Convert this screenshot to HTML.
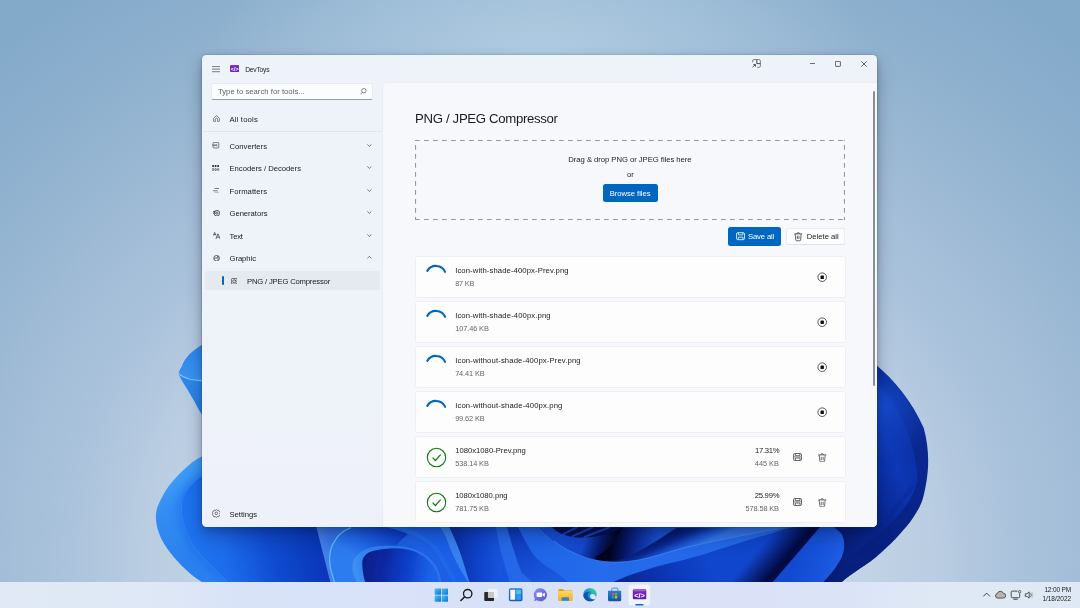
<!DOCTYPE html>
<html lang="en">
<head>
<meta charset="utf-8">
<title>DevToys - PNG / JPEG Compressor</title>
<style>
*{box-sizing:border-box;margin:0;padding:0}
html,body{width:1080px;height:608px;overflow:hidden}
body{position:relative;font-family:"Liberation Sans",sans-serif;color:#1b1b1b;background:#9ab9d4}
.abs,.t{position:absolute}
.t{white-space:pre;line-height:1;top:0;left:0}
#root{position:absolute;left:0;top:0;width:1080px;height:608px;will-change:transform}
#wall{position:absolute;left:0;top:0;width:1080px;height:608px}
#win{position:absolute;left:202px;top:55px;width:675px;height:472px;border-radius:4.5px;background:linear-gradient(180deg,#eef3f9 0%,#eef2f9 60%,#eef1f9 100%);box-shadow:0 0 0 .6px rgba(40,60,90,.2),0 9px 18px rgba(0,10,40,.28),0 2px 6px rgba(0,10,40,.18);overflow:hidden}
#content{position:absolute;left:179.6px;top:27px;width:494.9px;height:445px;background:#f6f8fc;border-top-left-radius:5px;border-left:.6px solid #e9edf3;border-top:.6px solid #e9edf3}
/* sidebar */
.nav{position:absolute;left:0;width:180.5px;height:20.25px}
.nav .t{left:27px;top:7.1px}
.nav svg{position:absolute}
.chev{position:absolute;left:164.4px;top:8.6px;width:4.7px;height:2.8px}
#sel{position:absolute;left:2.5px;top:215.6px;width:175px;height:19.5px;border-radius:2.5px;background:#e5eaf0}
#ind{position:absolute;left:19.5px;top:220.7px;width:1.8px;height:9.3px;border-radius:1px;background:#0067c0}
#search{position:absolute;left:8.7px;top:27.6px;width:162px;height:17.4px;border-radius:2.5px;background:#fbfcfe;border:.6px solid #e6eaf0;border-bottom:.7px solid #989ea6}
#sep{position:absolute;left:0;top:76px;width:179.6px;height:.6px;background:#dfe4ea}
/* content */
#drop{position:absolute;left:415px;top:140.2px;width:430px;height:80px}
.btn{position:absolute;border-radius:2.5px}
.card{position:absolute;left:415px;width:430.5px;height:42px;border-radius:2.5px;background:#fdfdfe;border:.6px solid #edeff3}
.card .fn{left:39.75px;top:11.1px}
.card .sz{left:39.75px;top:24.6px;color:#646668}
#task{position:absolute;left:0;top:581.5px;width:1080px;height:26.5px;background:linear-gradient(90deg,#e0e9f5 0%,#dfe8f6 14%,#d9e3f8 22%,#d8e1f8 45%,#dbe2f8 70%,#dbe4f7 79%,#dfe9f5 86%,#dfe9f5 100%)}
</style>
</head>
<body>
<div id="root">
<svg id="wall" viewBox="0 0 1080 608" width="1080" height="608">
<defs>
  <radialGradient id="bg" gradientUnits="userSpaceOnUse" cx="540" cy="560" r="800" gradientTransform="translate(540 560) scale(1 .87) translate(-540 -560)">
    <stop offset="0" stop-color="#d0deec"/><stop offset=".375" stop-color="#c4d5e6"/><stop offset=".49" stop-color="#bacde2"/>
    <stop offset=".586" stop-color="#abc3dc"/><stop offset=".675" stop-color="#a3bdd8"/><stop offset=".75" stop-color="#9ab8d3"/>
    <stop offset=".875" stop-color="#8db0ce"/><stop offset="1" stop-color="#84aaca"/>
  </radialGradient>
  <radialGradient id="tophl" gradientUnits="userSpaceOnUse" cx="540" cy="60" r="330" gradientTransform="translate(0 60) scale(1 .55) translate(0 -60)">
    <stop offset="0" stop-color="#b0cce2" stop-opacity=".95"/><stop offset="1" stop-color="#aecbe1" stop-opacity="0"/>
  </radialGradient>
  <linearGradient id="gP1" x1="0" y1="0" x2="0" y2="1"><stop offset="0" stop-color="#2c84ea"/><stop offset="1" stop-color="#3a94f2"/></linearGradient>
  <linearGradient id="gP1b" x1="0" y1="0" x2="0" y2="1"><stop offset="0" stop-color="#2f88ec"/><stop offset=".5" stop-color="#2f86ea"/><stop offset="1" stop-color="#2a7ce6"/></linearGradient>
  <linearGradient id="gP2" gradientUnits="userSpaceOnUse" x1="160" y1="485" x2="195" y2="560"><stop offset="0" stop-color="#3e9af5"/><stop offset=".35" stop-color="#328cf2"/><stop offset="1" stop-color="#2a80ee"/></linearGradient>
  <linearGradient id="gP2i" gradientUnits="userSpaceOnUse" x1="185" y1="560" x2="310" y2="525"><stop offset="0" stop-color="#2076f0"/><stop offset=".3" stop-color="#1c6cec"/><stop offset=".65" stop-color="#0f4cd0"/><stop offset="1" stop-color="#0a38b8"/></linearGradient>
  <linearGradient id="gA" gradientUnits="userSpaceOnUse" x1="318" y1="545" x2="345" y2="538"><stop offset="0" stop-color="#4a84ee"/><stop offset=".5" stop-color="#3674ea"/><stop offset="1" stop-color="#2e70ea"/></linearGradient>
  <linearGradient id="gB" gradientUnits="userSpaceOnUse" x1="385" y1="524" x2="360" y2="560"><stop offset="0" stop-color="#0c3cc4"/><stop offset=".3" stop-color="#1450d8"/><stop offset=".65" stop-color="#1f68e8"/><stop offset="1" stop-color="#2c7cf0"/></linearGradient>
  <linearGradient id="gC" gradientUnits="userSpaceOnUse" x1="362" y1="560" x2="440" y2="575"><stop offset="0" stop-color="#061e88"/><stop offset=".3" stop-color="#0929a4"/><stop offset=".6" stop-color="#0e42cc"/><stop offset=".85" stop-color="#1a60e6"/><stop offset="1" stop-color="#1c66ea"/></linearGradient>
  <linearGradient id="gR" gradientUnits="userSpaceOnUse" x1="860" y1="480" x2="920" y2="455"><stop offset="0" stop-color="#0a2c9e"/><stop offset=".6" stop-color="#0d38b6"/><stop offset="1" stop-color="#0b2ea4"/></linearGradient>

  <linearGradient id="gD1" gradientUnits="userSpaceOnUse" x1="400" y1="560" x2="450" y2="535"><stop offset="0" stop-color="#2270f0"/><stop offset="1" stop-color="#1c62e8"/></linearGradient>
  <linearGradient id="gG" gradientUnits="userSpaceOnUse" x1="455" y1="0" x2="500" y2="0"><stop offset="0" stop-color="#0a30a4"/><stop offset=".5" stop-color="#0e42c8"/><stop offset="1" stop-color="#1654dc"/></linearGradient>
  <linearGradient id="gW" gradientUnits="userSpaceOnUse" x1="520" y1="527" x2="545" y2="582"><stop offset="0" stop-color="#0c3abc"/><stop offset="1" stop-color="#1a58dc"/></linearGradient>
  <linearGradient id="gS1" gradientUnits="userSpaceOnUse" x1="540" y1="530" x2="700" y2="575"><stop offset="0" stop-color="#1e64e8"/><stop offset=".4" stop-color="#246cec"/><stop offset="1" stop-color="#2468e8"/></linearGradient>
  <linearGradient id="gBowl" gradientUnits="userSpaceOnUse" x1="560" y1="527" x2="640" y2="565"><stop offset="0" stop-color="#1a56dc"/><stop offset=".45" stop-color="#0c34b0"/><stop offset=".8" stop-color="#06186a"/><stop offset="1" stop-color="#0a2a90"/></linearGradient>
  <linearGradient id="gS3" gradientUnits="userSpaceOnUse" x1="610" y1="545" x2="656" y2="551"><stop offset="0" stop-color="#00041c"/><stop offset=".3" stop-color="#06145c"/><stop offset=".6" stop-color="#0c2e9c"/><stop offset="1" stop-color="#1a50d0"/></linearGradient>
  <linearGradient id="gU" gradientUnits="userSpaceOnUse" x1="673" y1="533.400" x2="682.200" y2="553.400"><stop offset="0" stop-color="#061a70"/><stop offset=".3" stop-color="#0a2890"/><stop offset=".65" stop-color="#1a54d2"/><stop offset="1" stop-color="#3378ec"/></linearGradient>
  <linearGradient id="gLow" gradientUnits="userSpaceOnUse" x1="630" y1="585" x2="700" y2="545"><stop offset="0" stop-color="#0a2894"/><stop offset=".5" stop-color="#0c38b8"/><stop offset="1" stop-color="#1046cc"/></linearGradient>
  <linearGradient id="gFold" gradientUnits="userSpaceOnUse" x1="772" y1="533.500" x2="796.600" y2="554.700"><stop offset="0" stop-color="#040e50" stop-opacity="0"/><stop offset=".45" stop-color="#040e50" stop-opacity=".6"/><stop offset=".8" stop-color="#030a44" stop-opacity="1"/><stop offset="1" stop-color="#030a44"/></linearGradient>
  <linearGradient id="gT" gradientUnits="userSpaceOnUse" x1="795" y1="552" x2="842" y2="560"><stop offset="0" stop-color="#124acf"/><stop offset=".6" stop-color="#1854dc"/><stop offset="1" stop-color="#1e5ee4"/></linearGradient>
  <clipPath id="sil"><path d="M150,300 L150,590 L841.7,590 L841.7,582 C847,577.5 853,573.5 859.8,568.6 C867,564 874,559 881.5,552.3 C888,546 894,541 899.6,534.3 C905,528 910,523 914,516.2 C918,510 921,505 923,498 C924.5,492 925.5,487 926.7,480 C929,465 929,447 923.7,428 C912,401 893,379 877,365.7 L877,300Z"/></clipPath>
  <linearGradient id="gCr" gradientUnits="userSpaceOnUse" x1="352" y1="565" x2="440" y2="550"><stop offset="0" stop-color="#3f92f3"/><stop offset=".12" stop-color="#3586f0"/><stop offset=".5" stop-color="#2c78ec"/><stop offset="1" stop-color="#2a70ea"/></linearGradient>
  <linearGradient id="gS2" gradientUnits="userSpaceOnUse" x1="560" y1="535" x2="612" y2="552"><stop offset="0" stop-color="#164ed4"/><stop offset=".45" stop-color="#1448ce"/><stop offset=".75" stop-color="#071a6c"/><stop offset="1" stop-color="#00041c"/></linearGradient>
  <linearGradient id="gRT" gradientUnits="userSpaceOnUse" x1="835" y1="550" x2="870" y2="560"><stop offset="0" stop-color="#061a70"/><stop offset="1" stop-color="#0a2a98"/></linearGradient>
  <linearGradient id="gRd" gradientUnits="userSpaceOnUse" x1="0" y1="470" x2="0" y2="582"><stop offset="0" stop-color="#051464" stop-opacity="0"/><stop offset="1" stop-color="#051464" stop-opacity=".5"/></linearGradient>
  <radialGradient id="gRl" gradientUnits="userSpaceOnUse" cx="884" cy="405" r="55"><stop offset="0" stop-color="#1a54d8" stop-opacity=".75"/><stop offset=".6" stop-color="#1448c8" stop-opacity=".35"/><stop offset="1" stop-color="#1448c8" stop-opacity="0"/></radialGradient>
  <filter id="b05" x="-10%" y="-10%" width="120%" height="120%"><feGaussianBlur stdDeviation=".6"/></filter>
  <filter id="b1" x="-20%" y="-20%" width="140%" height="140%"><feGaussianBlur stdDeviation="1"/></filter>
  <filter id="b3" x="-20%" y="-20%" width="140%" height="140%"><feGaussianBlur stdDeviation="3"/></filter>
  <filter id="b6" x="-30%" y="-30%" width="160%" height="160%"><feGaussianBlur stdDeviation="6"/></filter>
</defs>
<rect width="1080" height="608" fill="url(#bg)"/>
<rect width="1080" height="300" fill="url(#tophl)"/>

<!-- base body of bloom (mostly hidden under the window) -->
<path d="M203,345 L203,582 L841.7,582 L877,582 L877,300 L203,300Z" fill="#0f47cc" clip-path="url(#sil)"/>

<!-- P1 upper-left petal -->
<path d="M206,342.300 C199,347 194,350.500 189.900,354.100 C186,358 183.500,362 181.800,366.800 C180,370 178.600,372 178.800,373.700 C178.900,374.800 179.200,375.400 179.500,376 C182,381 185,385.500 187.600,389.800 C191,395.500 194,400.500 196.800,405.900 C199,410 202,415 206,421Z" fill="url(#gP1b)"/>
<path d="M206,342.300 C199,347 194,350.500 189.900,354.100 C186,358 183.500,362 181.800,366.800 C180,370 178.600,372 178.800,373.700 C184,378.600 194,380.600 206,380.600Z" fill="url(#gP1)"/>
<path d="M179,373.900 C184,378.600 194,380.800 206,380.800" fill="none" stroke="#7accf9" stroke-width="1.100"/>
<!-- P2 lower-left big petal -->
<path d="M206,454.500 C198,458 192,462 189.400,464.700 C182,471 177,476 172.100,482 C167,488 164,493 161,499.300 C158,505 156.500,509 156,514 C155.500,520 156.500,526 158.500,531.400 C160.500,538 163.500,543 167.200,548.600 C171.500,555 176,560 182,566 C188,572 194,577 201.700,582 L350,582 L350,520 L206,520Z" fill="url(#gP2)"/>
<path d="M206,473 C192,482 183,492 181.7,501 C180.6,512 182,522 186,532 C190,542 196,550 202.7,557 C210,565 220,575 228,582 L340,582 L330,520 L206,520Z" fill="#1664ea" filter="url(#b6)" opacity=".9"/>
<path d="M206,473 C192,482 183,492 181.7,501 C180.6,512 182,522 186,532 C190,542 196,550 202.7,557 C210,565 220,575 228,582 L340,582 L330,520 L206,520Z" fill="url(#gP2i)"/>
<path d="M203,475.500 C193,481 185.700,489.400 182,501.700 C181,510 181.500,516 183.200,521.500 C184.500,528 186.500,533 189.400,538.800 C193,546 197,551 201.700,556 C206,561 210,565 214,568.400 L227.700,582" fill="none" stroke="#3a90f4" stroke-width="1" opacity=".55" filter="url(#b05)"/>

<!-- bottom strip -->
<path d="M316.4,527 L330.3,582 L360,582 L360,520 L316,520Z" fill="url(#gA)"/>
<path d="M351,527.7 C343,531 338,535 335.8,539.4 C332,545 330.5,549 330.3,552 C329.3,556 329.4,559 329.6,561.7 C330,566 330.7,570 331.7,572.8 L334.4,582 L460,582 L460,520 L351,520Z" fill="url(#gB)"/>
<path d="M351,527.7 C343,531 338,535 335.8,539.4 C332,545 330.5,549 330.3,552 C329.3,556 329.4,559 329.6,561.7 C330,566 330.7,570 331.7,572.8 L334.4,582" fill="none" stroke="#5cbcf5" stroke-width="1.3"/>
<!-- inner curl C -->
<path d="M356.700,582 L353.900,575.500 C352.800,572 352.300,568.500 352.500,564.400 C352.800,560.500 355,557 359.400,553.300 C362.500,550.500 367,548.500 373.300,547 C379,545.800 386,545.600 394,545.700 C400,545.500 408,546.500 415,549 C424,552.500 431,558 436,565 C439,570 441,576 441.700,582Z" fill="url(#gCr)"/>
<path d="M366,584 C363.500,578 362.300,570 362.200,562.500 C362.500,557 366,553 373,551 C380,549.200 388,548.200 394,548.200 C401,548.200 408,549 414,551.300 C422,554.500 429,560 433.500,566.500 C436.500,571 438.500,577 439.300,584Z" fill="url(#gC)" filter="url(#b05)"/>

<path d="M408,533.900 C417,537.500 423,541 428.900,545 C434,549.500 437,554 438.900,558.900 L448.600,575.500 L452,582 L441.700,582 C441,576 439,570 436,565 C431,558 424,552.500 415,549 C408,546.500 402,545.600 396,545.600 C400,541 404,537 408,533.900Z" fill="#1d60e4"/>
<!-- right petal -->
<path d="M877,365.7 C893,379 912,401 923.7,428 C929,447 929,465 926.7,480 C925.5,487 924.5,492 923,498 C921,505 918,510 914,516.2 C910,523 905,528 899.6,534.3 C894,541 888,546 881.5,552.3 C874,559 867,564 859.8,568.6 C853,573.5 847,577.5 841.7,582 L780,582 L780,520 L877,520Z" fill="#09278f"/>
<path d="M874,380 C890,395 905,420 912,445 C917,465 917,475 917.7,480 C915,490 913,494 910.4,498 C905,508 899,515 892.3,521.6 C886,528 880,533 874.3,537.9 C864,546 853,553 843.5,559.6 C834,567 826,573 820,577.7 L820,520 L874,520Z" fill="url(#gR)"/>
<path d="M914,485.4 C908,493 901,500 896,507 C892,512 890,517 888.7,521.6" fill="none" stroke="#0a2a98" stroke-width="1.5" filter="url(#b1)"/>
<path d="M877,365.7 C893,379 912,401 923.7,428 C929,447 929,465 926.7,480 C925.5,487 924.5,492 923,498 C921,505 918,510 914,516.2 C910,523 905,528 899.6,534.3 C894,541 888,546 881.5,552.3 C874,559 867,564 859.8,568.6 C853,573.5 847,577.5 841.7,582 L780,582 L780,520 L877,520Z" fill="url(#gRd)"/>
<path d="M877,365.7 C893,379 912,401 923.7,428 C929,447 929,465 926.7,480 C925.5,487 924.5,492 923,498 C921,505 918,510 914,516.2 C910,523 905,528 899.6,534.3 C894,541 888,546 881.5,552.3 C874,559 867,564 859.8,568.6 C853,573.5 847,577.5 841.7,582 L780,582 L780,520 L877,520Z" fill="url(#gRl)"/>

<g clip-path="url(#sil)">
<!-- bands D -->
<path d="M387,527.6 C396,529.5 402,531.5 408,533.9 C417,537.5 423,541 428.9,545 C434,549.5 437,554 438.9,558.9 L448.6,575.5 L452,582 L475,582 L460,520 L387,520Z" fill="url(#gD1)"/>
<path d="M404,527 C416,530.5 428,537.5 436,546 C443,554 450,568 457,582 L475,582 L460,520Z" fill="#1a60e8"/>
<path d="M440.3,527 L445.8,536.7 L452.8,554.7 L459.7,568.6 L468,582 L472,582 L461,554.7 L455.6,540.8 L449.3,527Z" fill="#3880f0"/>
<!-- region G -->
<path d="M449.3,527 L455.6,540.8 L461,554.7 L469.4,582 L512,582 L497,520 L449,520Z" fill="url(#gG)"/>
<!-- band Le-Lf -->
<path d="M495.8,527 L500,547.8 L505.6,568.6 L509.7,582 L534,582 L522,572.8 L516.7,558.9 L511,540.8 L507,527Z" fill="#2468e8"/>
<!-- wedge Lf-Lg -->
<path d="M507,527 L511,540.8 L516.7,558.9 L522,572.8 L532,582 L570,582 C562,577 556,574 550,568.6 C541,562 536,558 533.3,554.7 L525,540.8 L518,527Z" fill="url(#gW)"/>
<!-- swoop S1 -->
<path d="M518,527 L525,540.8 L533.3,554.7 C538,560 544,565 550,568.6 C556,573 562,577 567.8,582 L613.6,582 C622,578 630,575 637.2,572.8 C647,569.5 656,566.5 665,564.4 C676,562 686,560.5 700,559 L800,527Z" fill="url(#gS1)"/>
<!-- lower right area under S1 -->
<path d="M613.6,582 C622,578 630,575 637.2,572.8 C647,569.5 656,566.5 665,564.4 C680,561 700,556 720,549 C750,540 775,532 793.5,527 L822,527 L822,582Z" fill="url(#gLow)"/>
<!-- bowl interior (S4) -->
<path d="M540,528.300 C545,533 549,537 553.900,540.800 C560,546 567,550 574.700,553.300 C581,556.500 588,558.800 595.600,560.300 C602,561.800 609,562.500 616.400,562.400 C624,562.200 630,561.500 637.200,560.300 C647,558.500 656,556 665,553.300 C674,550.700 682,548.500 690,546.400 C720,540 760,531 793.500,527Z" fill="url(#gU)"/>
<!-- S3 -->
<path d="M623,527.300 L678,527 C670,532 663,537 656.700,540.700 C651,544 646,547.500 640,550.700 C633,554.500 627,557.500 620,559.800 C614,561.500 606,562 598,560.500 C596,560 595,558.500 595,557.300 C599,554.500 603,552 606.700,549 C613,543 619,535 623,527.300Z" fill="url(#gS3)"/>
<!-- S2 band -->
<path d="M540,528.300 C545,533 549,537 553.900,540.800 C560,546 567,550 574.700,553.300 C581,556.500 588,558.800 595,560.200 L595,557.300 C599,554.500 603,552 606.700,549 C613,543 619,535 623.300,527.300 L553,527Z" fill="url(#gS2)"/>
<!-- small bowl interior -->
<path d="M552,527 C555,530.500 558,532.500 562,534 C567,536 573,537.300 579,537.500 C585,537.600 590,537.300 595.500,536.400 C601,535.400 607,534 612,532 C616,530.500 619,529 622,527Z" fill="#050f50"/>
<path d="M563.300,534.200L576.700,527.500M572.200,536.400L592.200,527.500M584.400,537L608.900,527.500" fill="none" stroke="#1a4cc8" stroke-width="2" stroke-linecap="round" filter="url(#b05)" opacity=".85"/>
<!-- rim highlight along S1 upper edge -->
<path d="M553.900,540.800 C560,546 567,550 574.700,553.300 C581,556.500 588,558.800 595.600,560.300 C602,561.800 609,562.500 616.400,562.400 C624,562.200 630,561.500 637.200,560.300 C647,558.500 656,556 665,553.300 C674,550.700 682,548.500 690,546.400 C720,540 760,531 793.500,527" fill="none" stroke="#4088f0" stroke-width="1.100" filter="url(#b05)" opacity=".75"/>
<!-- dark region right of T -->
<path d="M830,527 L876.700,527 C872,532 867,536 863.300,540.700 C858,546.500 854,552 850,557.300 C844,566 838,574 833.300,582 L815,582Z" fill="url(#gRT)"/>
<!-- dark fold -->
<path d="M780,520 L827,520 L773,582 L726,582Z" fill="url(#gFold)"/>
<!-- petal T -->
<path d="M820,527 L833.300,527 C838,530 840,532 841.700,534 C843.500,537.500 844.200,541 844.200,544 C844.200,549 843.500,553 841.700,557.300 C839,562.500 836.500,566.500 833.300,570.700 C830,575 826.500,578.500 823.300,582 L773,582Z" fill="url(#gT)"/>
</g>
</svg>

<div id="win"><div class="abs" style="left:.5px;top:0;width:674.5px;height:472px">
  <!-- title bar -->
  <svg class="abs" style="left:9.2px;top:10.8px" width="8.6" height="7" viewBox="0 0 8.6 7"><path d="M0 .6h8.6M0 3.15h8.6M0 5.7h8.6" stroke="#555" stroke-width=".75" fill="none"/></svg>
  <svg class="abs" style="left:27.1px;top:9.8px" width="9.6" height="7" viewBox="0 0 9 6.6"><rect width="9" height="6.6" rx="1" fill="#7425bc"/><rect x=".4" y=".4" width="8.2" height=".8" rx=".3" fill="#8d4ad0"/><text x="4.5" y="5.5" font-size="5.6" font-weight="700" text-anchor="middle" fill="#fff" font-family="Liberation Sans, sans-serif" textLength="7.4" lengthAdjust="spacingAndGlyphs">&lt;/&gt;</text></svg>
  <div class="abs" style="left:42.75px;top:11.8px"><span class="t" style="font-size:6.7px;letter-spacing:-0.234px;">DevToys</span></div>
  <!-- caption buttons -->
  <svg class="abs" style="left:549.6px;top:3.9px" width="9" height="9.1" viewBox="0 0 9 9.1" fill="none" stroke="#555" stroke-width=".7"><path d="M.6 3.400V2A1.400 1.400 0 0 1 2 .6H7A1.400 1.400 0 0 1 8.400 2V7A1.400 1.400 0 0 1 7 8.400H5.200"/><path d="M4.800 .6V4.600H8.400" stroke="#333" stroke-width=".85"/><path d="M.5 8.300L3 5.800" stroke="#333"/><path d="M1 5.300H3.800V8z" fill="#333" stroke="none"/></svg>
  <svg class="abs" style="left:607px;top:8.3px" width="5.8" height="1" viewBox="0 0 5.8 1"><path d="M0 .5h5.8" stroke="#333" stroke-width=".7"/></svg>
  <svg class="abs" style="left:632.4px;top:6.3px" width="5.8" height="5.8" viewBox="0 0 5.8 5.8"><rect x=".4" y=".4" width="5" height="5" rx=".6" fill="none" stroke="#333" stroke-width=".75"/></svg>
  <svg class="abs" style="left:658.5px;top:6.3px" width="6" height="6" viewBox="0 0 6 6"><path d="M.3 .3L5.7 5.7M5.7 .3L.3 5.7" stroke="#333" stroke-width=".75"/></svg>

  <!-- search -->
  <div id="search"><div class="abs" style="left:5.75px;top:4.4px;color:#60646a"><span class="t" style="font-size:7.7px;letter-spacing:0.017px;">Type to search for tools...</span></div>
    <svg class="abs" style="left:148.2px;top:4.6px" width="6.6" height="6.8" viewBox="0 0 6.6 6.8" fill="none" stroke="#555" stroke-width=".7"><circle cx="3.9" cy="2.7" r="2.2"/><path d="M2.3 4.4L.4 6.4"/></svg>
  </div>
  <!-- nav -->
  <div class="nav" style="top:53.6px">
    <svg style="left:10.3px;top:6.2px" width="7" height="7" viewBox="0 0 7 7" fill="none" stroke="#555" stroke-width=".7"><path d="M.6 3.2L3.5 .6 6.4 3.2V6a.5.5 0 0 1-.5.5H4.6V4.2a1.1 1.1 0 0 0-2.2 0V6.5H1.1A.5.5 0 0 1 .6 6z"/></svg>
    <span class="t" style="font-size:7.7px;letter-spacing:0.166px;">All tools</span></div>
  <div id="sep"></div>
  <div class="nav" style="top:80.6px">
    <svg style="left:9.9px;top:6.6px" width="7.2" height="6.4" viewBox="0 0 7.2 6.4" fill="none" stroke="#3a3a3a" stroke-width=".65"><rect x="1.1" y=".4" width="5.7" height="5.6" rx="1"/><path d="M0 3.2H3.6M2.6 2.2L3.6 3.2 2.600 4.200M4.800 1.900V4.500"/></svg>
    <span class="t" style="font-size:7.7px;letter-spacing:-0.012px;">Converters</span><svg class="chev" viewBox="0 0 4.7 2.8"><path d="M.3 .4L2.35 2.4 4.4 .4" fill="none" stroke="#444" stroke-width=".7"/></svg></div>
  <div class="nav" style="top:102.9px">
    <svg style="left:9.900px;top:6.900px" width="7.200" height="6" viewBox="0 0 7.200 6"><g fill="#333"><rect x=".2" y="0" width="1.700" height="2.100" rx=".3"/><rect x="2.750" y="0" width="1.700" height="2.100" rx=".3"/><rect x="5.300" y="0" width="1.700" height="2.100" rx=".3"/></g><g fill="none" stroke="#333" stroke-width=".65"><ellipse cx="1.050" cy="4.500" rx=".750" ry="1.100"/><ellipse cx="3.600" cy="4.500" rx=".750" ry="1.100"/><ellipse cx="6.150" cy="4.500" rx=".750" ry="1.100"/></g></svg>
    <span class="t" style="font-size:7.7px;letter-spacing:-0.016px;">Encoders / Decoders</span><svg class="chev" viewBox="0 0 4.7 2.8"><path d="M.3 .4L2.35 2.4 4.4 .4" fill="none" stroke="#444" stroke-width=".7"/></svg></div>
  <div class="nav" style="top:125.6px">
    <svg style="left:10.6px;top:7.2px" width="6.4" height="5.6" viewBox="0 0 6.4 5.6" fill="none" stroke="#444" stroke-width=".7"><path d="M1.6 .5H6.4M0 2.8H4.8M1.6 5.1H6.4"/></svg>
    <span class="t" style="font-size:7.7px;letter-spacing:0.036px;">Formatters</span><svg class="chev" viewBox="0 0 4.7 2.8"><path d="M.3 .4L2.35 2.4 4.4 .4" fill="none" stroke="#444" stroke-width=".7"/></svg></div>
  <div class="nav" style="top:147.9px">
    <svg style="left:10.2px;top:6.8px" width="7.2" height="6.4" viewBox="0 0 7.2 6.4" fill="none" stroke="#333" stroke-width=".75"><circle cx="3.9" cy="3.2" r="2.8"/><circle cx="3.9" cy="3.2" r="1.1"/><path d="M0 1.6H2.6M0 3.2H2.4"/></svg>
    <span class="t" style="font-size:7.7px;letter-spacing:-0.052px;">Generators</span><svg class="chev" viewBox="0 0 4.7 2.8"><path d="M.3 .4L2.35 2.4 4.4 .4" fill="none" stroke="#444" stroke-width=".7"/></svg></div>
  <div class="nav" style="top:170.6px">
    <svg style="left:10.2px;top:6.4px" width="7.4" height="7.2" viewBox="0 0 7.4 7.2" fill="none" stroke="#333" stroke-width=".7"><path d="M.3 3.6L1.7 .4 3.1 3.6M.8 2.6H2.6M2.9 7L5 1.8 7.1 7M3.7 5.2H6.3"/></svg>
    <span class="t" style="font-size:7.7px;letter-spacing:-0.203px;">Text</span><svg class="chev" viewBox="0 0 4.7 2.8"><path d="M.3 .4L2.35 2.4 4.4 .4" fill="none" stroke="#444" stroke-width=".7"/></svg></div>
  <div class="nav" style="top:192.9px">
    <svg style="left:10.3px;top:6.8px" width="7" height="6.4" viewBox="0 0 7 6.4" fill="none" stroke="#333" stroke-width=".75"><circle cx="3.6" cy="3.2" r="2.8"/><path d="M1 4.2C2 2.6 3.4 2.4 4 3.4S5.6 4.4 6.3 3.6"/><circle cx="4.8" cy="2" r=".5"/></svg>
    <span class="t" style="font-size:7.7px;letter-spacing:-0.070px;">Graphic</span><svg class="chev" viewBox="0 0 4.7 2.8"><path d="M.3 2.4L2.35 .4 4.4 2.4" fill="none" stroke="#444" stroke-width=".7"/></svg></div>
  <div id="sel"></div><div id="ind"></div>
  <div class="nav" style="top:215.6px">
    <svg style="left:28px;top:7px" width="6.6" height="6.6" viewBox="0 0 6.6 6.6" fill="none" stroke="#333" stroke-width=".7"><rect x=".4" y=".4" width="5.8" height="5.8" rx="1.3"/><circle cx="3.3" cy="3.3" r="1.6"/><path d="M3.3 3.3L4.4 2.2"/></svg>
    <span class="t" style="font-size:7.7px;letter-spacing:-0.195px;left:44.5px">PNG / JPEG Compressor</span></div>
  <div class="nav" style="top:448.5px">
    <svg style="left:9.2px;top:5.9px" width="8.6" height="8.6" viewBox="0 0 8.6 8.6" fill="none" stroke="#444" stroke-width=".7"><path d="M4.3 .5l1 .9 1.4-.2.5 1.3 1.2.7-.5 1.3.5 1.3-1.2.7-.5 1.3-1.4-.2-1 .9-1-.9-1.4.2-.5-1.3L.2 5.8l.5-1.3L.2 3.2l1.2-.7.5-1.3 1.4.2z"/><circle cx="4.3" cy="4.3" r="1.3"/></svg>
    <span class="t" style="font-size:7.7px;letter-spacing:-0.026px;">Settings</span></div>

  <div id="content"></div>
  <div class="abs" style="left:670.7px;top:36px;width:1.5px;height:295px;border-radius:1px;background:#8a8f96"></div>
</div></div>

<!-- content items in page coordinates -->
<div class="abs" style="left:415px;top:112.2px;color:#1c1c1c"><span class="t" style="font-size:13.2px;letter-spacing:-0.325px;">PNG / JPEG Compressor</span></div>
<svg id="drop" viewBox="0 0 430 80" fill="none" stroke="#92979e" stroke-width="1.05" stroke-dasharray="4.7 4.3"><path d="M0 .55H430"/><path d="M0 79.450H430"/><path d="M.55 0V80" stroke-dashoffset="4"/><path d="M429.450 0V80" stroke-dashoffset="4"/></svg>
<div class="abs" style="left:568.3px;top:155.95px"><span class="t" style="font-size:7.7px;letter-spacing:-0.044px;">Drag &amp; drop PNG or JPEG files here</span></div>
<div class="abs" style="left:627px;top:171.2px"><span class="t" style="font-size:7.7px;letter-spacing:-0.094px;">or</span></div>
<div class="btn" style="left:603px;top:184.2px;width:54.5px;height:17.7px;background:#0067c0;color:#fff"><div class="abs" style="left:6.8px;top:5.75px"><span class="t" style="font-size:7.7px;letter-spacing:-0.064px;">Browse files</span></div></div>

<div class="btn" style="left:728px;top:226.8px;width:53.2px;height:19.1px;background:#0067c0;color:#fff">
  <svg class="abs" style="left:7.800px;top:5.500px" width="9" height="8.400" viewBox="0 0 9 8" fill="none" stroke="#fff" stroke-width=".8"><rect x=".5" y=".5" width="8" height="7" rx="1.300"/><path d="M2.300 .5V2.700H6.900V.5M2.300 7.500V5H7V7.500"/></svg>
  <div class="abs" style="left:20px;top:6.4px"><span class="t" style="font-size:7.7px;letter-spacing:-0.151px;">Save all</span></div></div>
<div class="btn" style="left:786.4px;top:227.6px;width:58.5px;height:17.8px;background:#fcfdfe;border:.6px solid #e9ecf1;border-bottom-color:#dde1e6">
  <svg class="abs" style="left:7px;top:3.8px" width="8.4" height="9.2" viewBox="0 0 8.4 9.2" fill="none" stroke="#333" stroke-width=".75"><path d="M.3 1.9H8.1M2.9 1.9a1.3 1.3 0 0 1 2.6 0M1.2 1.9l.6 6a1 1 0 0 0 1 .9H5.6a1 1 0 0 0 1-.9l.6-6M3.4 3.8V6.9M5 3.8V6.9"/></svg>
  <div class="abs" style="left:19.4px;top:4.7px"><span class="t" style="font-size:7.7px;letter-spacing:-0.007px;">Delete all</span></div></div>

<div class="card" style="top:255.50px"><svg class="abs" style="left:7.2px;top:6px" width="26" height="16" viewBox="0 0 26 16"><path d="M4.3 7.9A10 10 0 0 1 22.1 8.9" fill="none" stroke="#0067c0" stroke-width="2.1" stroke-linecap="round"/></svg><span class="t" style="font-size:7.7px;letter-spacing:0.102px;left:39.15px;top:10.4px">Icon-with-shade-400px-Prev.png</span><span class="t" style="font-size:7.4px;letter-spacing:-0.223px;left:39.15px;top:23.9px;color:#636567">87 KB</span><svg class="abs" style="left:401.2px;top:15.2px" width="10.4" height="10.4" viewBox="0 0 10.4 10.4"><circle cx="5.2" cy="5.2" r="4.3" fill="none" stroke="#222" stroke-width=".75"/><rect x="3.5" y="3.5" width="3.4" height="3.4" rx=".4" fill="#111"/></svg></div>
<div class="card" style="top:300.50px"><svg class="abs" style="left:7.2px;top:6px" width="26" height="16" viewBox="0 0 26 16"><path d="M4.3 7.9A10 10 0 0 1 22.1 8.9" fill="none" stroke="#0067c0" stroke-width="2.1" stroke-linecap="round"/></svg><span class="t" style="font-size:7.7px;letter-spacing:0.115px;left:39.15px;top:10.4px">Icon-with-shade-400px.png</span><span class="t" style="font-size:7.4px;letter-spacing:-0.098px;left:39.15px;top:23.9px;color:#636567">107.46 KB</span><svg class="abs" style="left:401.2px;top:15.2px" width="10.4" height="10.4" viewBox="0 0 10.4 10.4"><circle cx="5.2" cy="5.2" r="4.3" fill="none" stroke="#222" stroke-width=".75"/><rect x="3.5" y="3.5" width="3.4" height="3.4" rx=".4" fill="#111"/></svg></div>
<div class="card" style="top:345.50px"><svg class="abs" style="left:7.2px;top:6px" width="26" height="16" viewBox="0 0 26 16"><path d="M4.3 7.9A10 10 0 0 1 22.1 8.9" fill="none" stroke="#0067c0" stroke-width="2.1" stroke-linecap="round"/></svg><span class="t" style="font-size:7.7px;letter-spacing:0.134px;left:39.15px;top:10.4px">Icon-without-shade-400px-Prev.png</span><span class="t" style="font-size:7.4px;letter-spacing:-0.132px;left:39.15px;top:23.9px;color:#636567">74.41 KB</span><svg class="abs" style="left:401.2px;top:15.2px" width="10.4" height="10.4" viewBox="0 0 10.4 10.4"><circle cx="5.2" cy="5.2" r="4.3" fill="none" stroke="#222" stroke-width=".75"/><rect x="3.5" y="3.5" width="3.4" height="3.4" rx=".4" fill="#111"/></svg></div>
<div class="card" style="top:390.50px"><svg class="abs" style="left:7.2px;top:6px" width="26" height="16" viewBox="0 0 26 16"><path d="M4.3 7.9A10 10 0 0 1 22.1 8.9" fill="none" stroke="#0067c0" stroke-width="2.1" stroke-linecap="round"/></svg><span class="t" style="font-size:7.7px;letter-spacing:0.142px;left:39.15px;top:10.4px">Icon-without-shade-400px.png</span><span class="t" style="font-size:7.4px;letter-spacing:-0.132px;left:39.15px;top:23.9px;color:#636567">99.62 KB</span><svg class="abs" style="left:401.2px;top:15.2px" width="10.4" height="10.4" viewBox="0 0 10.4 10.4"><circle cx="5.2" cy="5.2" r="4.3" fill="none" stroke="#222" stroke-width=".75"/><rect x="3.5" y="3.5" width="3.4" height="3.4" rx=".4" fill="#111"/></svg></div>
<div class="card" style="top:435.50px"><svg class="abs" style="left:9.9px;top:10.4px" width="21" height="21" viewBox="0 0 21 21" fill="none" stroke="#0f7b0f" stroke-width="1.1"><circle cx="10.5" cy="10.5" r="9.2"/><path d="M6.6 10.7L9.4 13.5 14.6 7.6" stroke-width="1.2"/></svg><span class="t" style="font-size:7.7px;letter-spacing:-0.004px;left:39.15px;top:10.4px">1080x1080-Prev.png</span><span class="t" style="font-size:7.4px;letter-spacing:-0.098px;left:39.15px;top:23.9px;color:#636567">538.14 KB</span><span class="t" style="font-size:7.7px;letter-spacing:-0.276px;left:auto;right:65.2px;top:10.3px">17.31%</span><span class="t" style="font-size:7.4px;letter-spacing:-0.030px;left:auto;right:65.6px;top:23.9px;color:#636567">445 KB</span><svg class="abs" style="left:376.600px;top:16.800px" width="9" height="8" viewBox="0 0 9 8" fill="none" stroke="#444" stroke-width=".8"><rect x=".5" y=".5" width="8" height="7" rx="1.300"/><path d="M2.300 .5V2.700H6.900V.5M2.300 7.500V5H7V7.500"/><path d="M1 3.800H8" stroke="#666" stroke-width="1.400" opacity=".55"/></svg><svg class="abs" style="left:402.4px;top:16px" width="8.4" height="9.2" viewBox="0 0 8.4 9.2" fill="none" stroke="#444" stroke-width=".75"><path d="M.1 1.9H8.3M2.9 1.9a1.3 1.3 0 0 1 2.6 0M1.2 1.9l.6 6a1 1 0 0 0 1 .9H5.6a1 1 0 0 0 1-.9l.6-6M3.250 3.800V7.200M5.150 3.800V7.200"/></svg></div>
<div class="card" style="top:480.50px"><svg class="abs" style="left:9.9px;top:10.4px" width="21" height="21" viewBox="0 0 21 21" fill="none" stroke="#0f7b0f" stroke-width="1.1"><circle cx="10.5" cy="10.5" r="9.2"/><path d="M6.6 10.7L9.4 13.5 14.6 7.6" stroke-width="1.2"/></svg><span class="t" style="font-size:7.7px;letter-spacing:-0.043px;left:39.15px;top:10.4px">1080x1080.png</span><span class="t" style="font-size:7.4px;letter-spacing:-0.098px;left:39.15px;top:23.9px;color:#636567">781.75 KB</span><span class="t" style="font-size:7.7px;letter-spacing:-0.236px;left:auto;right:65.2px;top:10.3px">25.99%</span><span class="t" style="font-size:7.4px;letter-spacing:-0.129px;left:auto;right:65.6px;top:23.9px;color:#636567">578.58 KB</span><svg class="abs" style="left:376.600px;top:16.800px" width="9" height="8" viewBox="0 0 9 8" fill="none" stroke="#444" stroke-width=".8"><rect x=".5" y=".5" width="8" height="7" rx="1.300"/><path d="M2.300 .5V2.700H6.900V.5M2.300 7.500V5H7V7.500"/><path d="M1 3.800H8" stroke="#666" stroke-width="1.400" opacity=".55"/></svg><svg class="abs" style="left:402.4px;top:16px" width="8.4" height="9.2" viewBox="0 0 8.4 9.2" fill="none" stroke="#444" stroke-width=".75"><path d="M.1 1.9H8.3M2.9 1.9a1.3 1.3 0 0 1 2.6 0M1.2 1.9l.6 6a1 1 0 0 0 1 .9H5.6a1 1 0 0 0 1-.9l.6-6M3.250 3.800V7.200M5.150 3.800V7.200"/></svg></div>

<div id="task"></div>
<svg class="abs" style="left:0;top:581.5px" width="1080" height="26.5" viewBox="0 581.5 1080 26.5">
<defs>
  <linearGradient id="tgS" x1="0" y1="0" x2="1" y2="1"><stop offset="0" stop-color="#4cc2f1"/><stop offset="1" stop-color="#0a74d4"/></linearGradient>
  <linearGradient id="tgW" x1="0" y1="0" x2="0" y2="1"><stop offset="0" stop-color="#2b7fd8"/><stop offset="1" stop-color="#175bb8"/></linearGradient>
  <linearGradient id="tgC" x1="0" y1="0" x2="1" y2="1"><stop offset="0" stop-color="#8b8ff0"/><stop offset="1" stop-color="#5558c4"/></linearGradient>
  <linearGradient id="tgF" x1="0" y1="0" x2="0" y2="1"><stop offset="0" stop-color="#ffd75a"/><stop offset="1" stop-color="#f3b420"/></linearGradient>
  <linearGradient id="tgE" x1="0" y1="1" x2="1" y2="0"><stop offset="0" stop-color="#0f66c0"/><stop offset=".5" stop-color="#1c97de"/><stop offset=".8" stop-color="#3cc4a0"/><stop offset="1" stop-color="#5ad87a"/></linearGradient>
  <linearGradient id="tgB" x1="0" y1="0" x2="0" y2="1"><stop offset="0" stop-color="#2f7fd0"/><stop offset="1" stop-color="#14509c"/></linearGradient>
  <linearGradient id="tgD" x1="0" y1="0" x2="0" y2="1"><stop offset="0" stop-color="#7b30c4"/><stop offset="1" stop-color="#5f1aa6"/></linearGradient>
</defs>
<!-- start -->
<g fill="url(#tgS)"><rect x="434.7" y="587.9" width="6.3" height="6.3" rx=".4"/><rect x="441.7" y="587.9" width="6.3" height="6.3" rx=".4"/><rect x="434.7" y="594.9" width="6.3" height="6.3" rx=".4"/><rect x="441.7" y="594.9" width="6.3" height="6.3" rx=".4"/></g>
<!-- search -->
<circle cx="467.7" cy="593.2" r="4.2" fill="none" stroke="#1c1c1c" stroke-width="1.35"/><path d="M464.7 596.3L460.9 600" stroke="#1c1c1c" stroke-width="1.6" stroke-linecap="round"/>
<!-- task view -->
<rect x="484.3" y="591.4" width="9.7" height="9.1" rx=".8" fill="#262626"/><rect x="487.9" y="588.2" width="9.7" height="9.3" rx=".8" fill="#f4f5f7" fill-opacity=".78"/>
<!-- widgets -->
<rect x="508.9" y="587.8" width="13.6" height="12.9" rx="1.6" fill="url(#tgW)"/><rect x="510.3" y="589.3" width="4.9" height="9.9" rx=".5" fill="#f7fafd"/><rect x="516.2" y="589.3" width="4.9" height="4.6" rx=".5" fill="#45c4f2"/><rect x="516.2" y="594.7" width="4.9" height="4.5" rx=".5" fill="#2aa0ea"/>
<!-- chat -->
<path d="M540.5 587.8a6.5 6.5 0 1 1-3.6 11.9l-2.8 1 .9-2.7a6.5 6.5 0 0 1 5.5-10.2z" fill="url(#tgC)"/><rect x="536.6" y="591.9" width="5.6" height="4.6" rx="1" fill="#fff"/><path d="M542.6 593.6l2.2-1.4v4l-2.2-1.4z" fill="#fff"/>
<!-- explorer -->
<path d="M558.3 589.6a1 1 0 0 1 1-1h3.6l1.4 1.3h7a1 1 0 0 1 1 1v8.3a1 1 0 0 1-1 1h-12a1 1 0 0 1-1-1z" fill="#e8a212"/><rect x="558.3" y="590.6" width="14" height="9.6" rx="1" fill="url(#tgF)"/><path d="M561.6 600.2v-2.4a1 1 0 0 1 1-1h5.4a1 1 0 0 1 1 1v2.4z" fill="#2b86d8"/>
<!-- edge -->
<circle cx="590" cy="594.1" r="6.7" fill="url(#tgE)"/><path d="M583.400 595.200c.6 3.300 3.400 5.600 6.700 5.600 2 0 3.800-.8 5-2.100-3.600 1.400-7.500-.3-7.600-3.600 0-1.900 1.400-3.300 3.200-3.500-3.300-1-6.600.5-7.300 3.600z" fill="#0c55a8"/><path d="M590.200 596.700c-.5-1.300.3-2.800 1.700-3.200 1.700-.4 3.400.8 3.500 2.600 1.600-.3 1.700-2.200 1.100-3.600l.3 1.600c0 1.700-.7 3.200-1.900 4.300-1.900.7-4.100-.2-4.700-1.700z" fill="#dfe7f5"/>
<!-- store -->
<path d="M611.600 590.500v-1.200a1.700 1.700 0 0 1 1.700-1.700h3a1.700 1.700 0 0 1 1.700 1.700v1.200" fill="none" stroke="#4ea6e4" stroke-width="1.100"/><path d="M608 590.300h13.200v8.900a1.600 1.600 0 0 1-1.600 1.600h-10a1.600 1.600 0 0 1-1.600-1.600z" fill="url(#tgB)"/><rect x="612" y="592.700" width="2.300" height="2.300" fill="#f25022"/><rect x="614.900" y="592.700" width="2.300" height="2.300" fill="#7fba00"/><rect x="612" y="595.600" width="2.300" height="2.300" fill="#00a4ef"/><rect x="614.900" y="595.600" width="2.300" height="2.300" fill="#ffb900"/>
<!-- devtoys (active) -->
<rect x="628.800" y="584.200" width="21.100" height="20.500" rx="2.200" fill="#f4f6fc" fill-opacity=".85" stroke="#fff" stroke-opacity=".6" stroke-width=".4"/>
<rect x="632.800" y="588.700" width="13.500" height="10" rx="1.200" fill="url(#tgD)"/><rect x="633.500" y="589.300" width="12.100" height="1.500" rx=".4" fill="#9a5edc"/>
<text x="639.550" y="597.200" font-family="Liberation Sans, sans-serif" font-size="7.5" font-weight="700" text-anchor="middle" fill="#fff" textLength="10.800" lengthAdjust="spacingAndGlyphs">&lt;/&gt;</text>
<rect x="635.200" y="603.500" width="8.400" height="1.500" rx=".75" fill="#0a6cd0"/>
<!-- tray -->
<path d="M983.300 595.900l3.300-3.300 3.300 3.300" fill="none" stroke="#222" stroke-width=".85"/>
<path d="M997.600 597.600a2.300 2.300 0 0 1-.4-4.500 3.300 3.300 0 0 1 6.200-.3 2.400 2.400 0 0 1-.3 4.800z" fill="#b9b4ac" stroke="#3a3a3a" stroke-width=".8"/>
<path d="M1017.500 590.600h-5.300a1 1 0 0 0-1 1v4.600a1 1 0 0 0 1 1h6.500a1 1 0 0 0 1-1v-3.300" fill="none" stroke="#2a2a2a" stroke-width=".8"/><path d="M1013.300 598.700h4.400" stroke="#2a2a2a" stroke-width=".9"/><circle cx="1019.600" cy="591.200" r="1.200" fill="none" stroke="#2a2a2a" stroke-width=".7"/>
<path d="M1025.300 593.300h1.700l2.200-1.900v6.300l-2.200-1.900h-1.700z" fill="none" stroke="#2a2a2a" stroke-width=".75" stroke-linejoin="round"/><path d="M1030.500 592.700a2.700 2.700 0 0 1 0 3.700" fill="none" stroke="#2a2a2a" stroke-width=".7"/><path d="M1031.700 591.600a4.300 4.300 0 0 1 0 6" fill="none" stroke="#9a9a9a" stroke-width=".6"/>
</svg>
<div class="abs" style="left:1044.4px;top:587.2px;color:#222"><span class="t" style="font-size:6.5px;letter-spacing:-0.161px;">12:00 PM</span></div>
<div class="abs" style="left:1042.4px;top:596.3px;color:#222"><span class="t" style="font-size:6.5px;letter-spacing:-0.028px;">1/18/2022</span></div>

</div>
</body>
</html>
